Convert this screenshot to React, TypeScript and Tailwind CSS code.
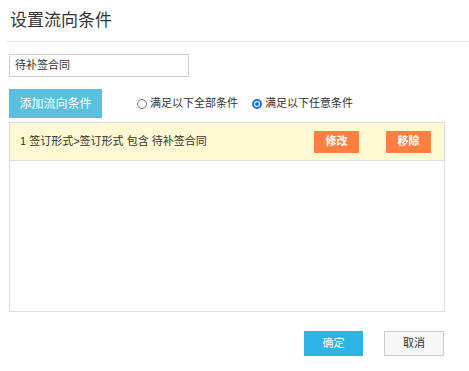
import React from "react";

const font = { fontFamily: '"Liberation Sans", "Noto Sans CJK SC", sans-serif' };

function Radio({ checked, label }: { checked?: boolean; label: string }) {
  return (
    <label className="flex items-center text-[11px] text-[#333]">
      {checked ? (
        <span className="w-[10px] h-[10px] rounded-full border-[2px] border-[#1a73e8] flex items-center justify-center mr-[3px]">
          <span className="w-[4px] h-[4px] rounded-full bg-[#1a73e8]" />
        </span>
      ) : (
        <span className="w-[10px] h-[10px] rounded-full border border-[#777] mr-[3px]" />
      )}
      {label}
    </label>
  );
}

export default function App() {
  return (
    <div className="w-[469px] h-[371px] bg-white text-[#333]" style={font}>
      <div className="ml-[6px] h-[42px] border-b border-[#e5e5e5] flex items-center pl-[4px] text-[17px] text-[#333]">
        设置流向条件
      </div>
      <div className="ml-[9px] mt-[12px] w-[180px] h-[23px] border border-[#ccc] flex items-center pl-[5px] text-[11px] text-[#333]">
        待补签合同
      </div>
      <div className="ml-[9px] mt-[12px] flex items-center">
        <button className="w-[93px] h-[29px] bg-[#5bc0de] text-white text-[12px] flex items-center justify-center">
          添加流向条件
        </button>
        <div className="ml-[35px] flex items-center gap-[14px]">
          <Radio label="满足以下全部条件" />
          <Radio checked label="满足以下任意条件" />
        </div>
      </div>
      <div className="ml-[9px] mt-[4px] w-[436px] h-[190px] border border-[#ddd]">
        <div className="h-[38px] bg-[#fef9d2] border-b border-[#ddd] flex items-center pl-[10px] pr-[13px] text-[11px] text-[#333]">
          <span className="flex-1">1 签订形式&gt;签订形式 包含 待补签合同</span>
          <button className="w-[45px] h-[22px] bg-[#ff7f40] text-white text-[11px] font-bold flex items-center justify-center">
            修改
          </button>
          <button className="ml-[27px] w-[45px] h-[22px] bg-[#ff7f40] text-white text-[11px] font-bold flex items-center justify-center">
            移除
          </button>
        </div>
      </div>
      <div className="mt-[19px] flex justify-end pr-[25px] gap-[21px]">
        <button className="w-[59px] h-[25px] bg-[#2db3e5] text-white text-[11px] flex items-center justify-center">
          确定
        </button>
        <button className="w-[60px] h-[25px] bg-[#f7f7f7] border border-[#ccc] text-[#333] text-[11px] flex items-center justify-center">
          取消
        </button>
      </div>
    </div>
  );
}
